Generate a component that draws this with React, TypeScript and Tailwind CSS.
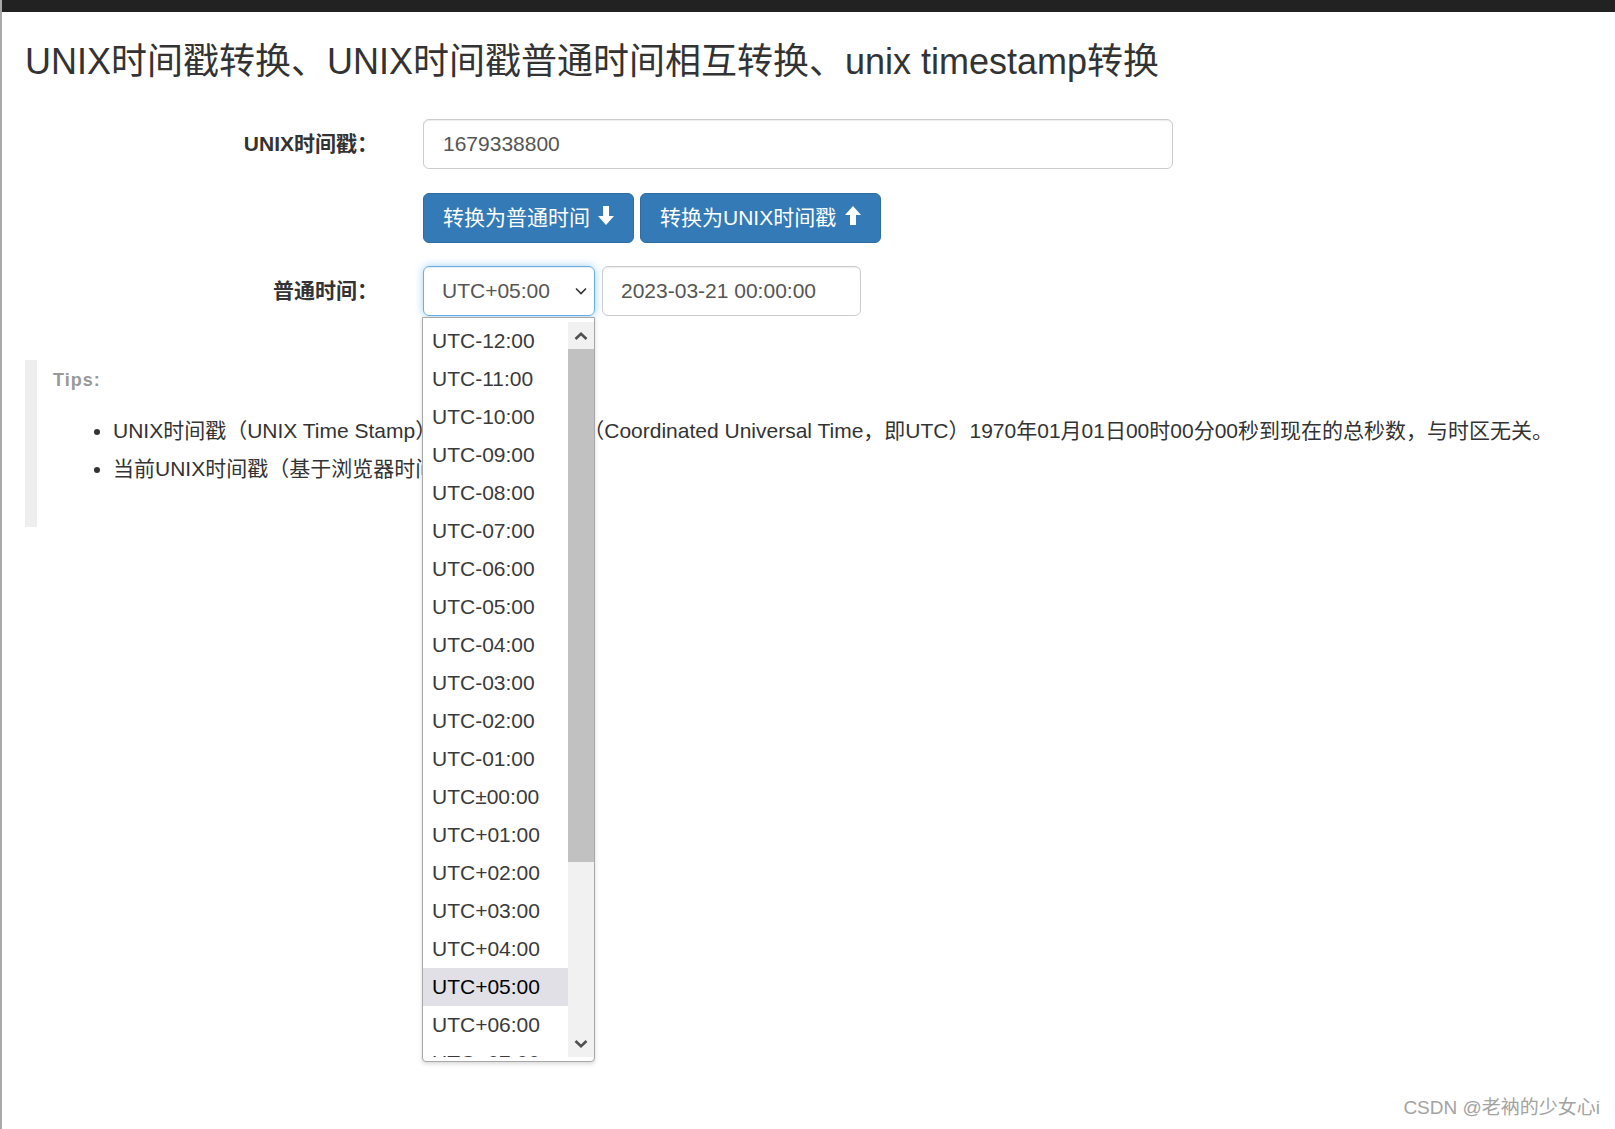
import { useState } from "react";

const offsets = Array.from({ length: 27 }, (_, i) => i - 12);

function zoneLabel(n: number) {
  const pad = (v: number) => String(v).padStart(2, "0");
  if (n === 0) return "UTC±00:00";
  return n < 0 ? `UTC-${pad(-n)}:00` : `UTC+${pad(n)}:00`;
}

function ArrowDown() {
  return (
    <svg width="16" height="19" viewBox="0 0 16 19" className="ml-[8px] -mt-[5px]">
      <path d="M5 0h6v10h5l-8 9-8-9h5z" fill="white" />
    </svg>
  );
}

function ArrowUp() {
  return (
    <svg width="16" height="19" viewBox="0 0 16 19" className="ml-[9px] -mt-[5px]">
      <path d="M8 0l8 9h-5v10H5V9H0z" fill="white" />
    </svg>
  );
}

function ZoneList({ selected }: { selected: number }) {
  return (
    <div className="absolute left-[-1px] top-[51px] z-10 w-[173px] rounded-b-[4px] border border-[#a7a7a7] bg-white py-[4px] shadow-[0_2px_4px_rgba(0,0,0,0.15)]">
      <div className="flex h-[735px] overflow-hidden">
        <div className="flex-1 overflow-hidden">
          {offsets.map((n) => (
            <div
              key={n}
              className={
                n === selected
                  ? "h-[38px] pl-[9px] leading-[38px] bg-[#e1e0e7] text-black"
                  : "h-[38px] pl-[9px] leading-[38px] text-[#3a3a3a]"
              }
            >
              {zoneLabel(n)}
            </div>
          ))}
        </div>
        <div className="flex w-[26px] flex-col bg-[#f1f1f1]">
          <div className="flex h-[27px] items-center justify-center">
            <svg width="14" height="8" viewBox="0 0 14 8">
              <polyline points="1.5,7 7,1.8 12.5,7" fill="none" stroke="#505050" strokeWidth="2.6" />
            </svg>
          </div>
          <div className="h-[513px] bg-[#c1c1c1]" />
          <div className="flex-1" />
          <div className="flex h-[27px] items-center justify-center">
            <svg width="14" height="8" viewBox="0 0 14 8">
              <polyline points="1.5,1 7,6.2 12.5,1" fill="none" stroke="#505050" strokeWidth="2.6" />
            </svg>
          </div>
        </div>
      </div>
    </div>
  );
}

export default function App() {
  const [stamp, setStamp] = useState("1679338800");
  const [date, setDate] = useState("2023-03-21 00:00:00");
  const zone = 5;

  return (
    <div className="relative h-[1129px] overflow-hidden border-l-2 border-[#a9a9a9] bg-white font-['Liberation_Sans','Noto_Sans_CJK_SC',sans-serif] text-[21px] text-[#333]">
      <div className="h-[12px] bg-[#222]" />
      <div className="px-[23px]">
        <h1 className="pt-[25px] text-[36px] font-normal leading-[50px] whitespace-nowrap">
          UNIX时间戳转换、UNIX时间戳普通时间相互转换、unix timestamp转换
        </h1>

        <div className="mt-[32px] flex items-center">
          <label className="w-[353px] text-right font-bold">UNIX时间戳：</label>
          <input
            value={stamp}
            onChange={(e) => setStamp(e.target.value)}
            className="ml-[45px] h-[50px] w-[750px] rounded-[6px] border border-[#ccc] px-[19px] text-[#555] shadow-[inset_0_1px_1px_rgba(0,0,0,0.075)] outline-none"
          />
        </div>

        <div className="mt-[24px] flex gap-[6px] pl-[398px]">
          <button className="flex h-[50px] items-center rounded-[6px] border border-[#2e6da4] bg-[#337ab7] px-[19px] text-white">
            转换为普通时间
            <ArrowDown />
          </button>
          <button className="flex h-[50px] items-center rounded-[6px] border border-[#2e6da4] bg-[#337ab7] px-[19px] text-white">
            转换为UNIX时间戳
            <ArrowUp />
          </button>
        </div>

        <div className="mt-[23px] flex items-center">
          <label className="w-[353px] text-right font-bold">普通时间：</label>
          <div className="relative ml-[45px] h-[50px] w-[172px]">
            <div className="flex h-full items-center justify-between rounded-[6px] border border-[#66afe9] pl-[18px] pr-[7px] text-[#555] shadow-[inset_0_1px_1px_rgba(0,0,0,0.075),0_0_8px_rgba(102,175,233,0.6)]">
              {zoneLabel(zone)}
              <svg width="12" height="8" viewBox="0 0 12 8">
                <polyline points="1,1.5 6,6.5 11,1.5" fill="none" stroke="#333" strokeWidth="1.6" />
              </svg>
            </div>
            <ZoneList selected={zone} />
          </div>
          <input
            value={date}
            onChange={(e) => setDate(e.target.value)}
            className="ml-[7px] h-[50px] w-[259px] rounded-[6px] border border-[#ccc] px-[18px] text-[#555] shadow-[inset_0_1px_1px_rgba(0,0,0,0.075)] outline-none"
          />
        </div>

        <div className="mt-[44px] border-l-[12px] border-[#eee] pb-[39px] pl-[16px] pt-[7px]">
          <div className="text-[18px] font-bold leading-[26px] tracking-[1px] text-[#999]">Tips:</div>
          <ul className="mt-[19px] list-disc pl-[60px] leading-[38px] whitespace-nowrap">
            <li>
              UNIX时间戳（UNIX Time Stamp）为世界协调时间（Coordinated Universal Time，即UTC）1970年01月01日00时00分00秒到现在的总秒数，与时区无关。
            </li>
            <li>当前UNIX时间戳（基于浏览器时间）：</li>
          </ul>
        </div>
      </div>

      <div className="absolute bottom-[8px] right-[15px] text-[19px] leading-[26px] text-[#a3a3a3]">
        CSDN @老衲的少女心i
      </div>
    </div>
  );
}
